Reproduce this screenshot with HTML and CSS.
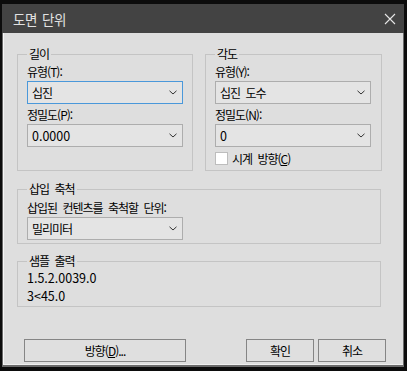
FILE: index.html
```html
<!DOCTYPE html>
<html lang="ko">
<head>
  <meta charset="UTF-8">
  <meta name="viewport" content="width=device-width, initial-scale=1.0">
  <title>도면 단위</title>
  <link rel="stylesheet" href="styles.css">
</head>
<body>
  <div class="window">
    <div class="titlebar">
      <span class="title">도면 단위</span>
      <svg class="close" width="12" height="12" viewBox="0 0 12 12">
        <path d="M1 1 L11 11 M11 1 L1 11" stroke="#e6e6e6" stroke-width="1.1" fill="none"/>
      </svg>
    </div>

    <div class="client">
      <div class="top-row">
        <!-- Length -->
        <fieldset class="group">
          <legend>길이</legend>
          <div class="field-label">유형(T):</div>
          <div class="select focused">
            <span>십진</span>
            <svg class="chevron" width="8" height="5" viewBox="0 0 8 5"><path d="M0.5 0.8 L4 4 L7.5 0.8" stroke="#333" fill="none"/></svg>
          </div>
          <div class="field-label second">정밀도(P):</div>
          <div class="select">
            <span class="num">0.0000</span>
            <svg class="chevron" width="8" height="5" viewBox="0 0 8 5"><path d="M0.5 0.8 L4 4 L7.5 0.8" stroke="#333" fill="none"/></svg>
          </div>
        </fieldset>

        <!-- Angle -->
        <fieldset class="group">
          <legend>각도</legend>
          <div class="field-label">유형(Y):</div>
          <div class="select">
            <span>십진 도수</span>
            <svg class="chevron" width="8" height="5" viewBox="0 0 8 5"><path d="M0.5 0.8 L4 4 L7.5 0.8" stroke="#333" fill="none"/></svg>
          </div>
          <div class="field-label second">정밀도(N):</div>
          <div class="select">
            <span class="num">0</span>
            <svg class="chevron" width="8" height="5" viewBox="0 0 8 5"><path d="M0.5 0.8 L4 4 L7.5 0.8" stroke="#333" fill="none"/></svg>
          </div>
          <div class="check-row">
            <span class="checkbox"></span>
            <span>시계 방향(<u>C</u>)</span>
          </div>
        </fieldset>
      </div>

      <!-- Insert scale -->
      <fieldset class="group wide scale">
        <legend>삽입 축척</legend>
        <div class="field-label">삽입된 컨텐츠를 축척할 단위:</div>
        <div class="select">
          <span>밀리미터</span>
          <svg class="chevron" width="8" height="5" viewBox="0 0 8 5"><path d="M0.5 0.8 L4 4 L7.5 0.8" stroke="#333" fill="none"/></svg>
        </div>
      </fieldset>

      <!-- Sample output -->
      <fieldset class="group wide sample">
        <legend>샘플 출력</legend>
        <div class="num sample-line">1.5.2.0039.0</div>
        <div class="num sample-line">3&lt;45.0</div>
      </fieldset>

      <div class="buttons">
        <button class="btn btn-wide">방향(<u>D</u>)...</button>
        <div class="btn-group">
          <button class="btn">확인</button>
          <button class="btn">취소</button>
        </div>
      </div>
    </div>
  </div>
</body>
</html>
```

FILE: styles.css
```css
* {
  margin: 0;
  padding: 0;
  box-sizing: border-box;
}

body {
  background-color: #0c0c0c;
  font-family: "Noto Sans CJK KR", "Noto Sans", sans-serif;
  font-size: 12px;
  color: #000;
}

.window {
  width: 402px;
  margin: 4px 0 0 2px;
  background-color: #6a6a6a;
  padding-bottom: 2px;
}

.titlebar {
  height: 29px;
  background-color: #434343;
  display: flex;
  align-items: center;
  justify-content: space-between;
  padding: 0 8px 0 11px;
}

.title {
  color: #e2e2e2;
  font-size: 13.5px;
  letter-spacing: -0.5px;
  word-spacing: 2px;
}

.close {
  display: block;
}

.client {
  margin: 0 1px;
  height: 332px;
  background-color: #dedede;
  border-left: 1px solid #f6f6f6;
  border-bottom: 1px solid #f0f0f0;
  padding: 13px 0 0 13px;
  letter-spacing: -1px;
  word-spacing: 3px;
}

.top-row {
  display: grid;
  grid-template-columns: 176px 177px;
  column-gap: 12px;
}

.group {
  border: 1px solid #c4c4c4;
  padding: 2px 9px 5px 9px;
}

.group legend {
  padding: 0 2px;
  line-height: 16px;
}

.field-label {
  line-height: 15px;
  height: 15px;
  margin-bottom: 2px;
}

.field-label.second {
  margin-top: 3px;
}

.select {
  width: 156px;
  height: 23px;
  border: 1px solid #adadad;
  background-color: #e4e4e4;
  display: flex;
  align-items: center;
  justify-content: space-between;
  padding: 0 5px 0 4px;
}

.select.focused {
  border-color: #4a98da;
}

.num {
  font-size: 12.5px;
  letter-spacing: 0;
}

.chevron {
  display: block;
}

.check-row {
  display: flex;
  align-items: center;
  gap: 4px;
  margin-top: 5px;
  height: 13px;
}

.checkbox {
  width: 13px;
  height: 13px;
  background-color: #fff;
  border: 1px solid #bdbdbd;
}

.wide {
  width: 364px;
}

.scale {
  margin-top: 10px;
  padding: 3px 9px 3px 9px;
}

.sample {
  margin-top: 9px;
  padding: 0 9px 1px 9px;
}

.sample-line {
  line-height: 18px;
}

.buttons {
  display: flex;
  justify-content: space-between;
  width: 362px;
  margin: 32px 0 0 7px;
}

.btn-group {
  display: flex;
  gap: 4px;
}

.btn {
  width: 68px;
  height: 23px;
  border: 1px solid #858585;
  background-color: #dfdfdf;
  font-family: inherit;
  font-size: 12px;
  letter-spacing: -1px;
  word-spacing: 3px;
  color: #000;
}

.btn-wide {
  width: 162px;
}
```
